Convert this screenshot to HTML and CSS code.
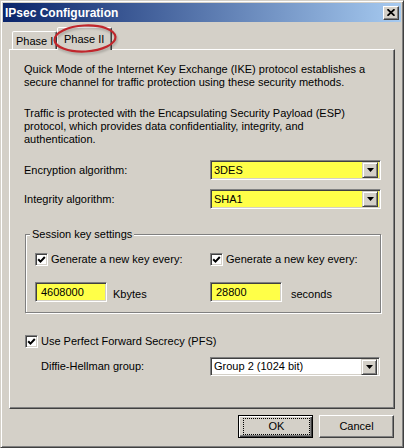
FILE: index.html
```html
<!DOCTYPE html>
<html>
<head>
<meta charset="utf-8">
<title>IPsec Configuration</title>
<link rel="stylesheet" href="styles.css">
</head>
<body>
<div class="window">
  <div class="titlebar">
    <span class="title">IPsec Configuration</span>
    <span class="close"><svg width="8" height="7" viewBox="0 0 8 7"><path d="M0.5 0.2 L7.5 6.8 M7.5 0.2 L0.5 6.8" stroke="#000" stroke-width="1.7" fill="none"/></svg></span>
  </div>
  <div class="client">
    <div class="tabs">
      <div class="tab">Phase I</div>
      <div class="tab active">Phase II</div>
      <svg class="mark" width="66" height="32" viewBox="0 0 66 32"><ellipse cx="33" cy="15.5" rx="30.5" ry="13" transform="rotate(-3 33 15.5)" fill="none" stroke="#c0262c" stroke-width="2.2"/></svg>
    </div>
    <div class="panel">
      <p class="text">Quick Mode of the Internet Key Exchange (IKE) protocol establishes a<br>secure channel for traffic protection using these security methods.</p>
      <p class="text">Traffic is protected with the Encapsulating Security Payload (ESP)<br>protocol, which provides data confidentiality, integrity, and<br>authentication.</p>
      <div class="field-row first">
        <span>Encryption algorithm:</span>
        <div class="combo yellow"><span class="value">3DES</span><span class="drop"><svg width="7" height="4" viewBox="0 0 7 4"><path d="M0 0 H7 L3.5 4 Z" fill="#000"/></svg></span></div>
      </div>
      <div class="field-row">
        <span>Integrity algorithm:</span>
        <div class="combo yellow"><span class="value">SHA1</span><span class="drop"><svg width="7" height="4" viewBox="0 0 7 4"><path d="M0 0 H7 L3.5 4 Z" fill="#000"/></svg></span></div>
      </div>
      <fieldset class="group">
        <legend>Session key settings</legend>
        <div class="keygrid">
          <div class="check"><span class="box"><svg width="9" height="9" viewBox="0 0 9 9"><path d="M1.2 4.2 L3.5 6.6 L7.8 2" stroke="#000" stroke-width="2" fill="none"/></svg></span><span>Generate a new key every:</span></div>
          <div class="check"><span class="box"><svg width="9" height="9" viewBox="0 0 9 9"><path d="M1.2 4.2 L3.5 6.6 L7.8 2" stroke="#000" stroke-width="2" fill="none"/></svg></span><span>Generate a new key every:</span></div>
          <div class="amount"><span class="input">4608000</span><span class="unit kb">Kbytes</span></div>
          <div class="amount"><span class="input">28800</span><span class="unit sec">seconds</span></div>
        </div>
      </fieldset>
      <div class="check pfs"><span class="box"><svg width="9" height="9" viewBox="0 0 9 9"><path d="M1.2 4.2 L3.5 6.6 L7.8 2" stroke="#000" stroke-width="2" fill="none"/></svg></span><span>Use Perfect Forward Secrecy (PFS)</span></div>
      <div class="field-row dh">
        <span class="dh-label">Diffie-Hellman group:</span>
        <div class="combo white"><span class="value">Group 2 (1024 bit)</span><span class="drop"><svg width="7" height="4" viewBox="0 0 7 4"><path d="M0 0 H7 L3.5 4 Z" fill="#000"/></svg></span></div>
      </div>
    </div>
    <div class="buttons">
      <button class="btn default"><span class="focus">OK</span></button>
      <button class="btn">Cancel</button>
    </div>
  </div>
</div>
</body>
</html>
```

FILE: styles.css
```css
* { box-sizing: border-box; }
html, body { margin: 0; padding: 0; }
body {
  background: #d4d0c8;
  font-family: "Liberation Sans", Arial, sans-serif;
  font-size: 11px;
  line-height: 13px;
  color: #000;
}
.window {
  width: 404px;
  height: 448px;
  background: #d4d0c8;
  border: 1px solid;
  border-color: #d4d0c8 #404040 #404040 #d4d0c8;
  box-shadow: inset 1px 1px 0 #fff, inset -1px -1px 0 #808080;
  padding: 2px;
  display: flex;
  flex-direction: column;
}
.titlebar {
  height: 19px;
  display: flex;
  align-items: center;
  justify-content: space-between;
  padding: 0 2px 0 2px;
  background: linear-gradient(to right, #0a246a, #a6caf0);
}
.title {
  color: #fff;
  font-weight: bold;
  font-size: 12px;
  line-height: 14px;
}
.close {
  width: 16px;
  height: 14px;
  background: #d4d0c8;
  border: 1px solid;
  border-color: #fff #404040 #404040 #fff;
  box-shadow: inset -1px -1px 0 #808080;
  display: flex;
  align-items: center;
  justify-content: center;
}
.client {
  display: flex;
  flex-direction: column;
  padding: 5px 6px 0 6px;
}
.tabs {
  position: relative;
  height: 22px;
  display: flex;
  align-items: flex-end;
  padding-left: 3px;
  z-index: 1;
}
.tab {
  width: 45px;
  height: 18px;
  padding: 3px 0 0 3px;
  border: 1px solid;
  border-bottom: none;
  border-color: #fff #404040 transparent #fff;
  box-shadow: inset -1px 0 0 #808080;
  border-radius: 2px 2px 0 0;
  background: #d4d0c8;
}
.tab.active {
  width: 55px;
  height: 23px;
  margin-bottom: -1px;
  padding: 5px 0 0 6px;
  position: relative;
  z-index: 2;
}
.mark {
  position: absolute;
  left: 43px;
  top: -4px;
  overflow: visible;
  z-index: 3;
  filter: drop-shadow(1px 2px 1px rgba(0, 0, 0, 0.22));
}
.panel {
  height: 360px;
  border: 1px solid;
  border-color: #fff #404040 #404040 #fff;
  box-shadow: inset -1px -1px 0 #808080;
  padding: 13px 13px 0 14px;
}
.text { margin: 0; }
.text + .text { margin-top: 18px; }
.field-row {
  display: flex;
  align-items: center;
  justify-content: space-between;
  margin-top: 9px;
}
.field-row.first { margin-top: 14px; }
.combo {
  width: 171px;
  height: 20px;
  border: 1px solid;
  border-color: #808080 #fff #fff #808080;
  box-shadow: inset 1px 1px 0 #404040, inset -1px -1px 0 #d4d0c8;
  padding: 2px;
  display: flex;
  align-items: center;
}
.combo.yellow { background: #ffff48; }
.combo.white { background: #fff; }
.combo .value { flex: 1; padding-left: 1px; }
.drop {
  width: 16px;
  height: 16px;
  background: #d4d0c8;
  border: 1px solid;
  border-color: #d4d0c8 #404040 #404040 #d4d0c8;
  box-shadow: inset 1px 1px 0 #fff, inset -1px -1px 0 #808080;
  display: flex;
  align-items: center;
  justify-content: center;
}
.group {
  margin: 19px 0 0 1px;
  width: 356px;
  padding: 0;
  border: 1px solid #808080;
  box-shadow: inset 1px 1px 0 #fff, 1px 1px 0 #fff;
}
.group legend {
  margin-left: 4px;
  padding: 0 2px;
  background: #d4d0c8;
}
.keygrid {
  display: grid;
  grid-template-columns: 175px 1fr;
  row-gap: 16px;
  padding: 12px 0 10px 9px;
}
.check {
  display: flex;
  align-items: center;
  gap: 3px;
  height: 13px;
}
.box {
  width: 13px;
  height: 13px;
  background: #fff;
  border: 1px solid;
  border-color: #808080 #fff #fff #808080;
  box-shadow: inset 1px 1px 0 #404040, inset -1px -1px 0 #d4d0c8;
  display: flex;
  align-items: center;
  justify-content: center;
}
.amount {
  display: flex;
  align-items: flex-end;
}
.input {
  width: 72px;
  height: 20px;
  background: #ffff48;
  border: 1px solid;
  border-color: #808080 #fff #fff #808080;
  box-shadow: inset 1px 1px 0 #404040, inset -1px -1px 0 #d4d0c8;
  padding: 0 0 0 5px;
  display: flex;
  align-items: center;
}
.unit { margin-bottom: 1px; }
.unit.kb { margin-left: 6px; }
.unit.sec { margin-left: 9px; }
.pfs { margin: 22px 0 0 1px; }
.dh { margin-top: 9px; }
.dh-label { padding-left: 17px; }
.dh .combo { width: 170px; height: 19px; margin-right: 1px; }
.buttons {
  display: flex;
  justify-content: flex-end;
  gap: 6px;
  margin-top: 6px;
  padding-right: 1px;
}
.btn {
  width: 75px;
  height: 23px;
  margin: 0;
  font: inherit;
  color: #000;
  background: #d4d0c8;
  border: 1px solid;
  border-color: #fff #404040 #404040 #fff;
  box-shadow: inset -1px -1px 0 #808080;
  padding: 0;
  display: flex;
  align-items: center;
  justify-content: center;
}
.btn.default {
  border-color: #000;
  box-shadow: inset 1px 1px 0 #fff, inset -1px -1px 0 #404040, inset -2px -2px 0 #808080;
  padding: 2px 2px 2px 4px;
}
.focus {
  width: 100%;
  height: 100%;
  border: 1px dotted #000;
  display: flex;
  align-items: center;
  justify-content: center;
}
```
